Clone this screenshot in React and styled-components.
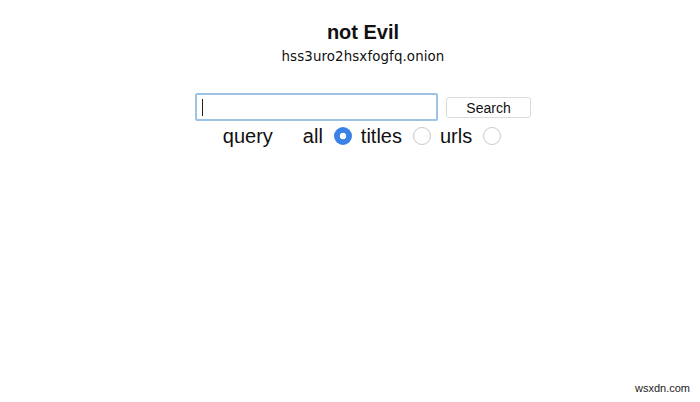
import React from "react";
import styled, { createGlobalStyle } from "styled-components";

const Global = createGlobalStyle`
  html, body {
    margin: 0;
    padding: 0;
    background: #ffffff;
  }
  body {
    font-family: "Liberation Sans", Arial, sans-serif;
    color: #111;
  }
`;

const App = () => {
  return (
    <Page>
      <Global />
      <Header>
        <Title>not Evil</Title>
        <Onion>hss3uro2hsxfogfq.onion</Onion>
      </Header>
      <SearchForm onSubmit={(e) => e.preventDefault()}>
        <SearchRow>
          <QueryInput>
            <Caret />
          </QueryInput>
          <SearchButton type="button">Search</SearchButton>
        </SearchRow>
        <OptionRow>
          <OptionLabel>query</OptionLabel>
          <OptionLabel $gap={30}>all</OptionLabel>
          <Radio $checked />
          <OptionLabel>titles</OptionLabel>
          <Radio />
          <OptionLabel>urls</OptionLabel>
          <Radio />
        </OptionRow>
      </SearchForm>
      <Watermark>wsxdn.com</Watermark>
    </Page>
  );
};

export default App;

const Page = styled.div`
  position: relative;
  width: 700px;
  height: 402px;
  padding-left: 26px;
  box-sizing: border-box;
  display: flex;
  flex-direction: column;
  align-items: center;
`;

const Header = styled.div`
  display: flex;
  flex-direction: column;
  align-items: center;
  padding-top: 20px;
`;

const Title = styled.h1`
  margin: 0;
  font-size: 20px;
  line-height: 24px;
  font-weight: 700;
  color: #111;
`;

const Onion = styled.div`
  margin-top: 4px;
  font-family: "DejaVu Sans", Verdana, sans-serif;
  font-size: 13.4px;
  letter-spacing: 0.1px;
  line-height: 18px;
  color: #111;
`;

const SearchForm = styled.form`
  margin-top: 27px;
  display: flex;
  flex-direction: column;
  align-items: center;
`;

const SearchRow = styled.div`
  display: flex;
  align-items: center;
  gap: 8px;
`;

const QueryInput = styled.div`
  width: 243px;
  height: 28px;
  box-sizing: border-box;
  border: 2px solid #9cc2e6;
  border-radius: 2px;
  background: #fff;
  display: flex;
  align-items: center;
  padding-left: 5px;
`;

const Caret = styled.span`
  display: block;
  width: 1px;
  height: 17px;
  background: #222;
`;

const SearchButton = styled.button`
  width: 85px;
  height: 21px;
  margin-top: 1px;
  border: 1px solid #dcdcdc;
  border-radius: 3px;
  background: #fff;
  font-family: "Liberation Sans", Arial, sans-serif;
  font-size: 14px;
  color: #111;
  padding: 0;
`;

const OptionRow = styled.div`
  display: flex;
  align-items: center;
  margin-top: 2px;
  height: 26px;
  margin-right: 2px;
`;

const OptionLabel = styled.span`
  font-size: 20px;
  line-height: 24px;
  color: #111;
  margin-left: ${(p) => (p.$gap ? `${p.$gap}px` : "9px")};

  &:first-child {
    margin-left: 0;
  }
`;

const Radio = styled.span`
  width: 18px;
  height: 18px;
  box-sizing: border-box;
  border-radius: 50%;
  margin-left: 11px;
  border: ${(p) => (p.$checked ? "none" : "1px solid #c9c9c9")};
  background: ${(p) =>
    p.$checked
      ? "radial-gradient(circle, #fff 0 3px, #3c82e6 3.6px)"
      : "#fff"};
`;

const Watermark = styled.div`
  position: absolute;
  right: 10px;
  bottom: 8px;
  font-size: 11px;
  color: #222;
`;
